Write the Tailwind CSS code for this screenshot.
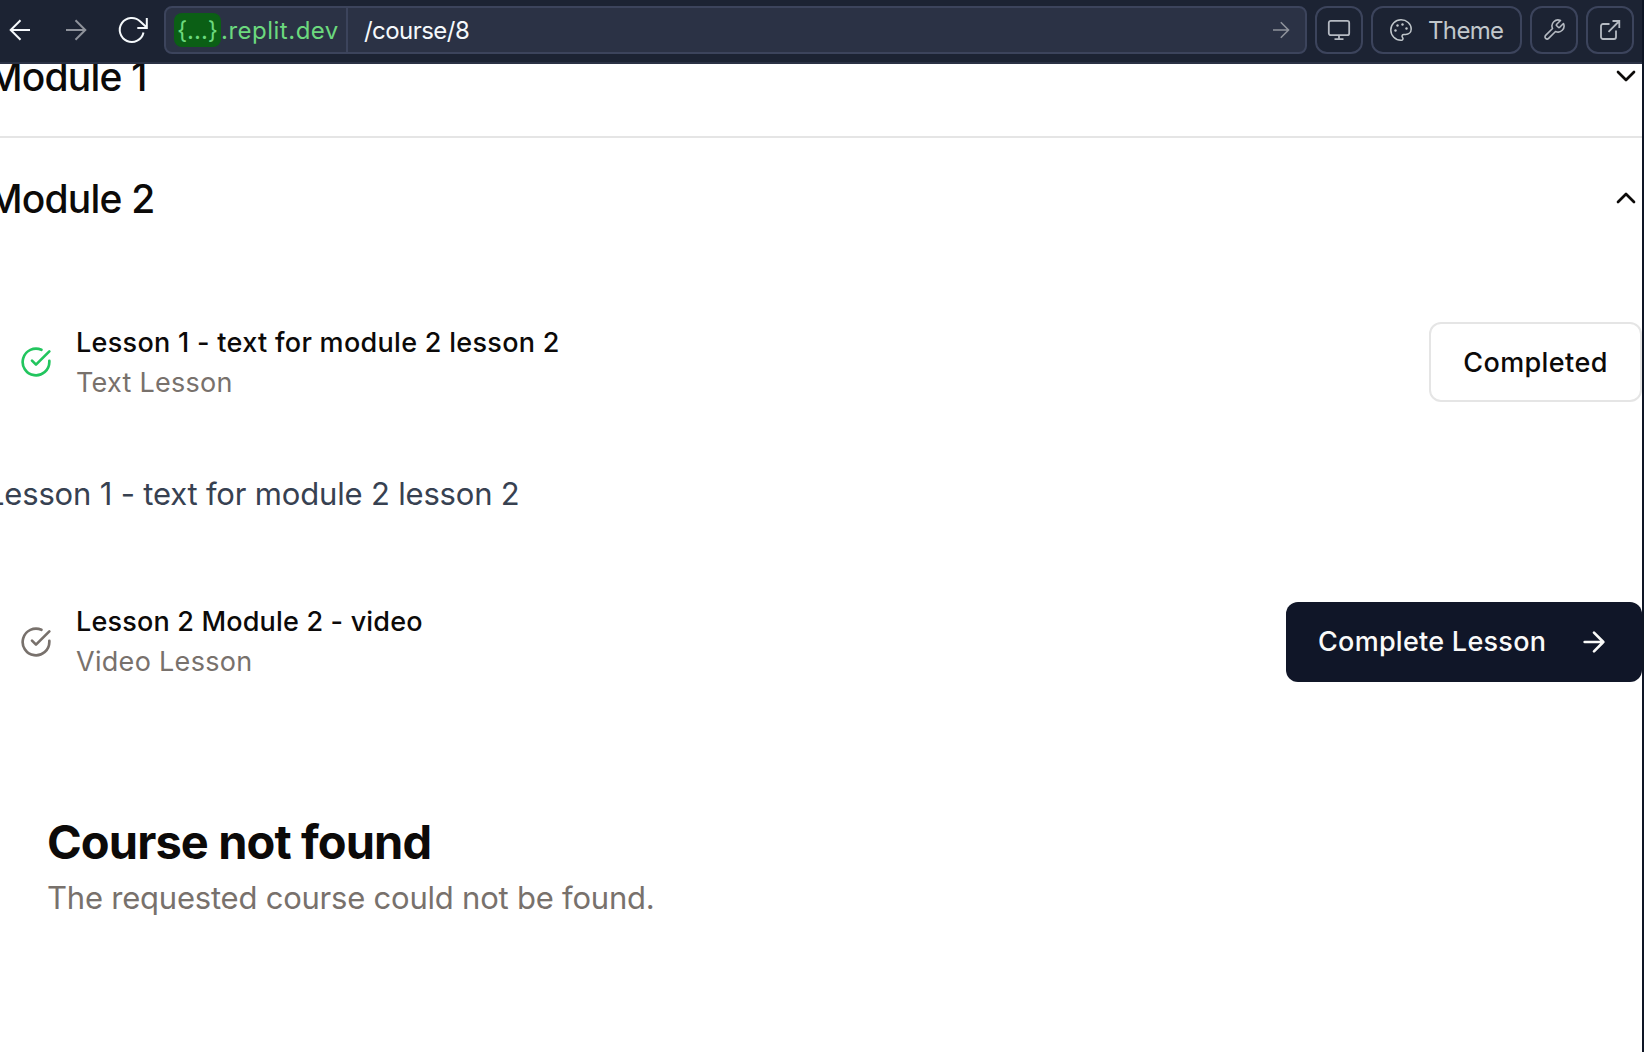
<!DOCTYPE html>
<html lang="en">
<head>
<meta charset="utf-8">
<title>Course</title>
<script src="https://cdn.jsdelivr.net/npm/@tailwindcss/browser@4"></script>
</head>
<body class="h-screen overflow-hidden bg-[#0e1525] pr-[2px] font-[Inter,sans-serif]">
<div class="flex h-full flex-col overflow-hidden bg-white">
  <header class="flex h-16 shrink-0 items-start gap-2 border-b-2 border-[#2b3245] bg-[#1c2333] pt-[6px] pr-2 text-[24px]">
    <nav class="flex h-12 w-[156px] shrink-0 items-center text-[#f5f9fc]">
      <svg class="ml-2 size-6" viewBox="0 0 24 24" fill="none" stroke="currentColor" stroke-width="2"><path d="M22 12H3M12.5 2.2L2.7 12l9.8 9.8"/></svg>
      <svg class="ml-8 size-6 text-[#8e929b]" viewBox="0 0 24 24" fill="none" stroke="currentColor" stroke-width="2"><path d="M2 12h19M11.500 2.200L21.300 12l-9.800 9.800"/></svg>
      <svg class="ml-[29px] size-8" viewBox="0 0 32 32" fill="none" stroke="currentColor" stroke-width="2"><path d="M26.500 18.500A12 12 0 1 1 23.300 7.500L29.500 13.200M29.800 4v10h-9.500"/></svg>
    </nav>
    <div class="flex h-12 flex-1 items-center rounded-lg border-2 border-[#3c445c] bg-[#2b3245]">
      <div class="flex h-full w-[182px] shrink-0 items-center border-r-2 border-[#3c445c] pl-2 text-[#6cd97e]">
        <span class="flex h-[34px] w-[47px] items-center justify-center rounded-lg bg-[#0b5f15] pt-px whitespace-nowrap">{...}</span><span class="pt-[2px] tracking-[0.5px] whitespace-nowrap">.replit.dev</span>
      </div>
      <span class="flex-1 pt-[2px] pl-4 tracking-[-0.55px] whitespace-nowrap text-[#f5f9fc]">/course/8</span>
      <svg class="mr-3 size-6 text-[#8e929b]" viewBox="0 0 24 24" fill="none" stroke="currentColor" stroke-width="1.600"><path d="M4 12h15.300M11.800 4.300l7.700 7.700-7.700 7.700"/></svg>
    </div>
    <button class="flex size-12 items-center justify-center rounded-xl border-2 border-[#3c445c] text-[#b5bac2]">
      <svg class="size-6" viewBox="0 0 24 24" fill="none" stroke="currentColor" stroke-width="1.800"><rect x="1.800" y="2.800" width="20.400" height="14.400" rx="2"/><path d="M12 17.200v4M7.500 21.200h9"/></svg>
    </button>
    <button class="flex h-12 w-[151px] items-center rounded-xl border-2 border-[#3c445c] pl-4 text-[#c2c8cc]">
      <svg class="size-6 shrink-0" viewBox="0 0 24 24" fill="none" stroke="currentColor" stroke-width="1.500"><path d="M12 22.200C6.400 22.200 1.800 17.600 1.800 12S6.400 1.800 12 1.800 22.200 5.900 22.200 11c0 3.400-2.700 5.400-5.500 5.400h-1.900a1.800 1.800 0 0 0-1.400 2.900l.3.400a1.600 1.600 0 0 1-1.700 2.500Z"/><g fill="currentColor" stroke="none"><circle cx="13.500" cy="6.500" r="1.200"/><circle cx="17.500" cy="10.500" r="1.200"/><circle cx="8.500" cy="7.500" r="1.200"/><circle cx="6.500" cy="12.500" r="1.200"/></g></svg>
      <span class="ml-[15px] pt-[2px] tracking-[-0.65px]">Theme</span>
    </button>
    <button class="flex size-12 items-center justify-center rounded-xl border-2 border-[#3c445c] text-[#b5bac2]">
      <svg class="size-6" viewBox="0 0 24 24" fill="none" stroke="currentColor" stroke-width="1.600" stroke-linejoin="round"><path d="M14.700 6.300a1 1 0 0 0 0 1.400l1.600 1.600a1 1 0 0 0 1.400 0l3.770-3.770a6 6 0 0 1-7.940 7.940l-6.910 6.910a2.120 2.120 0 0 1-3-3l6.910-6.910a6 6 0 0 1 7.940-7.940l-3.760 3.760z"/></svg>
    </button>
    <button class="flex size-12 items-center justify-center rounded-xl border-2 border-[#3c445c] text-[#b5bac2]">
      <svg class="size-6" viewBox="0 0 24 24" fill="none" stroke="currentColor" stroke-width="1.800"><path d="M18 12.500V19a2 2 0 0 1-2 2H5a2 2 0 0 1-2-2V8a2 2 0 0 1 2-2h6.500M14.500 3H21.300v7M21.300 3L10.500 13.800"/></svg>
    </button>
  </header>
  <main class="flex-1 overflow-hidden text-[#0c0a09]">
    <section class="-mt-12 flex h-[122px] items-center justify-between border-b-2 border-[#e5e5e5]">
      <h3 class="-ml-[13px] pt-[2px] text-[39px] leading-[56px] font-medium tracking-[-0.8px] whitespace-nowrap">Module 1</h3>
      <svg class="size-8" viewBox="0 0 24 24" fill="none" stroke="currentColor" stroke-width="2" stroke-linecap="round" stroke-linejoin="round"><path d="m6 9 6 6 6-6"/></svg>
    </section>
    <section>
      <div class="flex h-[120px] items-center justify-between">
        <h3 class="-ml-[13px] pt-[2px] text-[39px] leading-[56px] font-medium tracking-[-0.8px] whitespace-nowrap">Module 2</h3>
        <svg class="size-8" viewBox="0 0 24 24" fill="none" stroke="currentColor" stroke-width="2" stroke-linecap="round" stroke-linejoin="round"><path d="m18 15-6-6-6 6"/></svg>
      </div>
      <div class="mt-16 flex h-20 items-center text-[27px] leading-10">
        <svg class="ml-5 size-8 text-[#22c55e]" viewBox="0 0 24 24" fill="none" stroke="currentColor" stroke-width="2" stroke-linecap="round" stroke-linejoin="round"><path d="M22 11.080V12a10 10 0 1 1-5.930-9.140"/><path d="m9 11 3 3L22 4"/></svg>
        <div class="ml-6 flex-1 pt-[2px] whitespace-nowrap">
          <p class="font-medium tracking-[0.3px]">Lesson 1 - text for module 2 lesson 2</p>
          <p class="tracking-[0.27px] text-[#78716c]">Text Lesson</p>
        </div>
        <button class="h-20 w-[213px] rounded-xl border-2 border-[#e5e5e5] pt-[2px] font-medium tracking-[0.4px]">Completed</button>
      </div>
      <p class="mt-16 -ml-[13px] h-14 text-[31px] leading-[56px] tracking-[-0.18px] whitespace-nowrap text-[#374151]">Lesson 1 - text for module 2 lesson 2</p>
      <div class="mt-20 flex h-20 items-center text-[27px] leading-10">
        <svg class="ml-5 size-8 text-[#78716c]" viewBox="0 0 24 24" fill="none" stroke="currentColor" stroke-width="2" stroke-linecap="round" stroke-linejoin="round"><path d="M22 11.080V12a10 10 0 1 1-5.930-9.140"/><path d="m9 11 3 3L22 4"/></svg>
        <div class="ml-6 flex-1 whitespace-nowrap">
          <p class="font-medium tracking-[0.18px]">Lesson 2 Module 2 - video</p>
          <p class="tracking-[0.3px] text-[#78716c]">Video Lesson</p>
        </div>
        <button class="flex h-20 w-[356px] items-center justify-between rounded-xl bg-[#101628] px-8 font-medium tracking-[0.27px] whitespace-nowrap text-[#fafaf9]">Complete Lesson
          <svg class="size-8" viewBox="0 0 24 24" fill="none" stroke="currentColor" stroke-width="2" stroke-linecap="round" stroke-linejoin="round"><path d="M5 12h14M12 5l7 7-7 7"/></svg>
        </button>
      </div>
    </section>
    <section class="mt-[136px] pl-[47px] whitespace-nowrap">
      <h1 class="text-[47px] leading-[48px] font-bold tracking-[-0.9px]">Course not found</h1>
      <p class="mt-2 text-[31px] leading-[48px] tracking-[-0.22px] text-[#78716c]">The requested course could not be found.</p>
    </section>
  </main>
</div>
</body>
</html>
